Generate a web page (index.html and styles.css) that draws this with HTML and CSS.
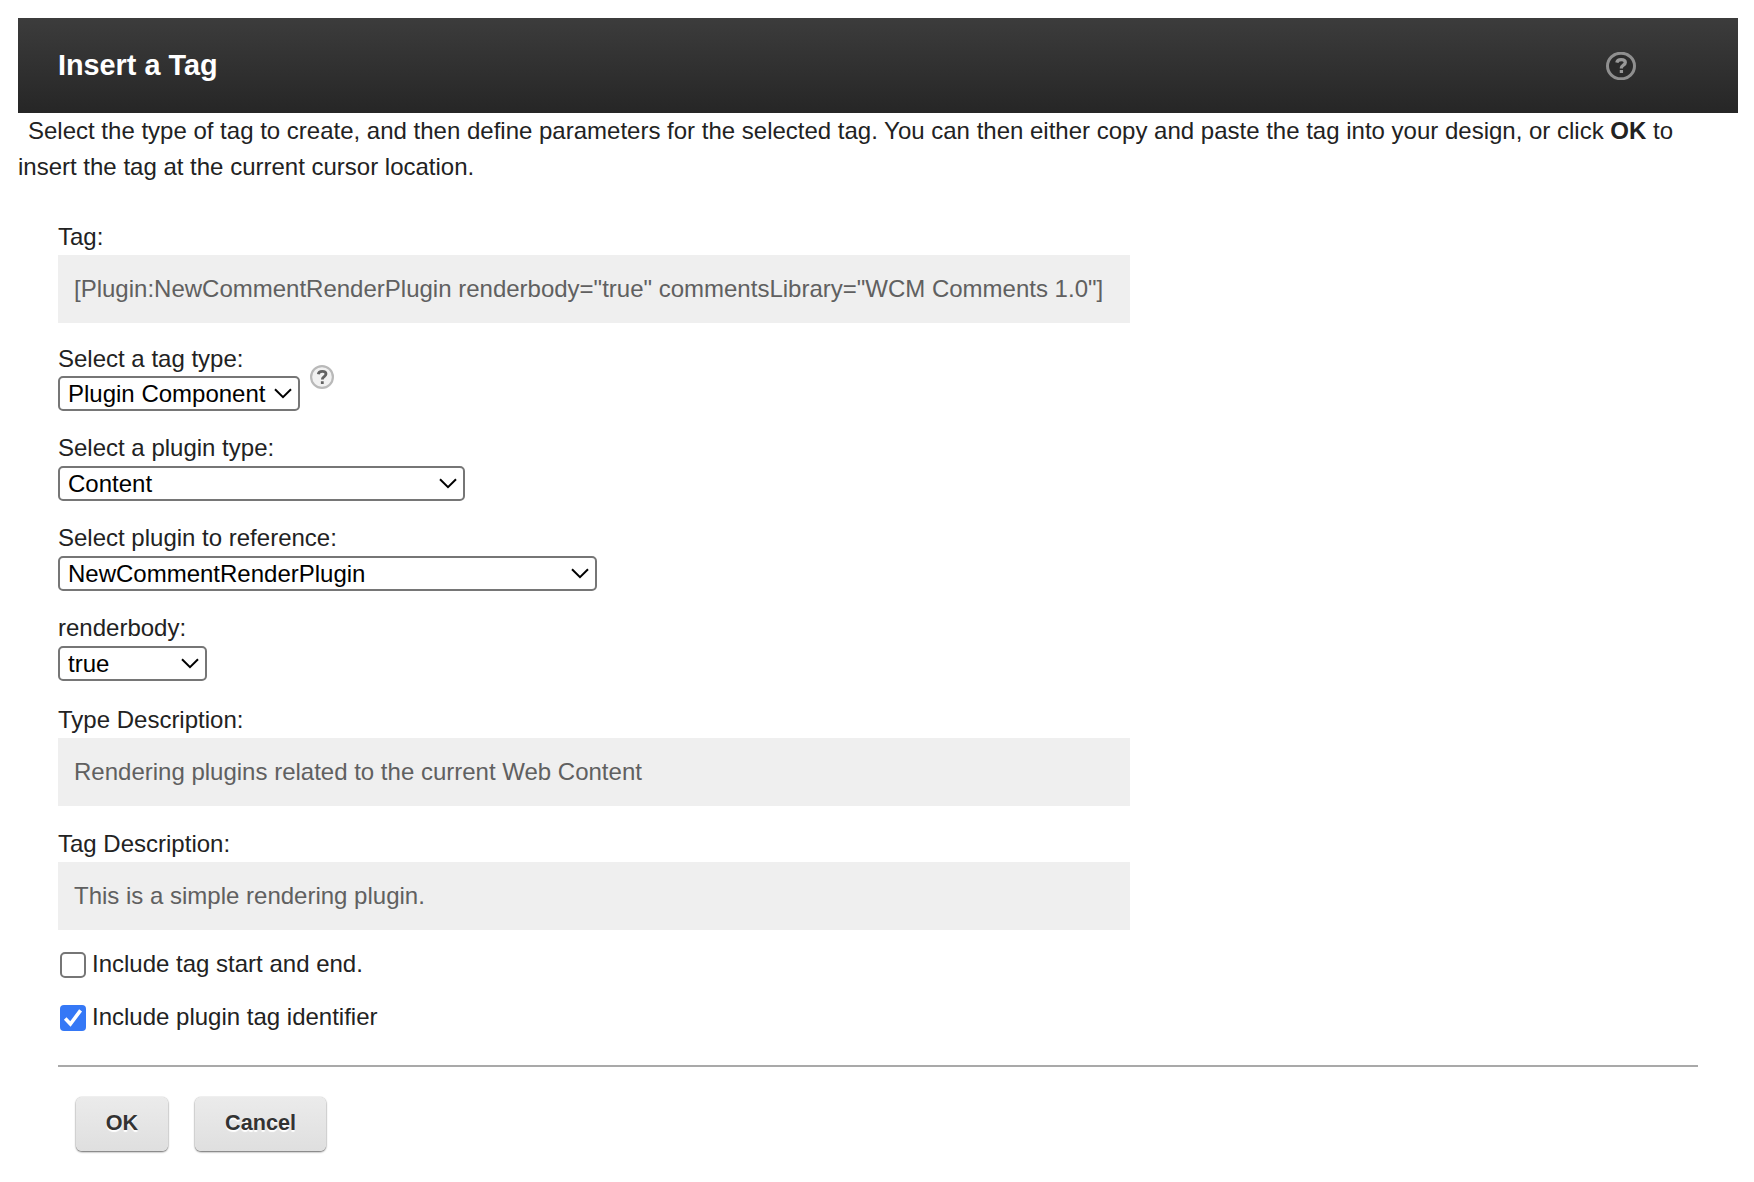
FILE: index.html
```html
<!DOCTYPE html>
<html lang="en">
<head>
<meta charset="utf-8">
<title>Insert a Tag</title>
<link rel="stylesheet" href="styles.css">
</head>
<body>
<header class="header">
  <h1 class="title">Insert a Tag</h1>
  <svg class="help-dark" width="30" height="28" viewBox="0 0 30 28"><ellipse cx="15" cy="14" rx="13.5" ry="12.8" fill="#2b2b2b" stroke="#8f8f8f" stroke-width="3"/><path d="M10.800 10.600C11.200 8.400 13 7.600 15.100 7.600c2.500 0 4.200 1.100 4.200 3 0 2.600-3.900 2.500-3.900 5.200v.7M15.400 18v3" fill="none" stroke="#999" stroke-width="3.300"/></svg>
</header>
<p class="intro">Select the type of tag to create, and then define parameters for the selected tag. You can then either copy and paste the tag into your design, or click <b>OK</b> to insert the tag at the current cursor location.</p>
<form class="form">
  <div class="field field-output">
    <label class="label">Tag:</label>
    <div class="output">[Plugin:NewCommentRenderPlugin renderbody="true" commentsLibrary="WCM Comments 1.0"]</div>
  </div>
  <div class="field with-help">
    <div>
      <label class="label" for="tag-type">Select a tag type:</label>
      <div class="select w-tag">
        <select id="tag-type"><option>Plugin Component</option></select>
        <svg class="chevron" width="18" height="11" viewBox="0 0 18 11"><path d="M1 1.200l8 8 8-8"/></svg>
      </div>
    </div>
    <svg class="help-light" width="24" height="24" viewBox="0 0 24 24"><circle cx="12" cy="12" r="10.900" fill="#f1f1f1" stroke="#b9b9b9" stroke-width="2.200"/><path d="M8.300 9.200C8.600 7 10.200 6.300 12.200 6.300c2.200 0 3.800 1 3.800 2.800 0 2.400-3.600 2.500-3.600 5v.5M12.300 16.300v2.700" fill="none" stroke="#626262" stroke-width="2.800"/></svg>
  </div>
  <div class="field">
    <label class="label" for="plugin-type">Select a plugin type:</label>
    <div class="select w-type">
      <select id="plugin-type"><option>Content</option></select>
      <svg class="chevron" width="18" height="11" viewBox="0 0 18 11"><path d="M1 1.200l8 8 8-8"/></svg>
    </div>
  </div>
  <div class="field">
    <label class="label" for="plugin-ref">Select plugin to reference:</label>
    <div class="select w-ref">
      <select id="plugin-ref"><option>NewCommentRenderPlugin</option></select>
      <svg class="chevron" width="18" height="11" viewBox="0 0 18 11"><path d="M1 1.200l8 8 8-8"/></svg>
    </div>
  </div>
  <div class="field field-last">
    <label class="label" for="renderbody">renderbody:</label>
    <div class="select w-body">
      <select id="renderbody"><option>true</option></select>
      <svg class="chevron" width="18" height="11" viewBox="0 0 18 11"><path d="M1 1.200l8 8 8-8"/></svg>
    </div>
  </div>
  <div class="field field-desc">
    <label class="label">Type Description:</label>
    <div class="output">Rendering plugins related to the current Web Content</div>
  </div>
  <div class="field field-desc">
    <label class="label">Tag Description:</label>
    <div class="output">This is a simple rendering plugin.</div>
  </div>
  <label class="check">
    <svg class="box" width="26" height="26" viewBox="0 0 26 26"><rect x="1" y="1" width="24" height="24" rx="4" fill="#fff" stroke="#767676" stroke-width="2"/></svg>
    <span>Include tag start and end.</span>
  </label>
  <label class="check">
    <svg class="box" width="26" height="26" viewBox="0 0 26 26"><rect width="26" height="26" rx="4" fill="#3578f6"/><path d="M5.200 13.600l5.200 5.400L20.600 5.400" fill="none" stroke="#fff" stroke-width="3.600"/></svg>
    <span>Include plugin tag identifier</span>
  </label>
  <div class="actions">
    <button class="btn btn-ok" type="button">OK</button>
    <button class="btn btn-cancel" type="button">Cancel</button>
  </div>
</form>
</body>
</html>
```
FILE: styles.css
```css
* { box-sizing: border-box; }
body {
  margin: 0;
  padding: 18px 16px 0 18px;
  background: #fff;
  color: #222;
  font: 24px/36px "Liberation Sans", Arial, sans-serif;
}
svg { display: block; }
.header {
  display: flex;
  align-items: center;
  justify-content: space-between;
  height: 95px;
  padding: 0 102px 0 40px;
  background: linear-gradient(#3c3c3c, #262626);
}
.title { margin: 0; padding-bottom: 2px; color: #fff; font-size: 28.8px; line-height: 36px; }
.intro { margin: 0 0 34px; text-indent: 10px; }
.form { margin: 0 40px; }
.field { margin-bottom: 19px; }
.field-output { margin-bottom: 17px; }
.field-last { margin-bottom: 21px; }
.field-desc { margin-bottom: 20px; }
.label { display: block; height: 36px; }
.with-help .label { padding-top: 1px; }
.output {
  width: 1072px;
  height: 68px;
  padding: 16px;
  background: #efefef;
  color: #606060;
}
.with-help { display: flex; gap: 10px; }
.help-light { margin-top: 25px; }
.select { display: grid; height: 35px; }
.select select {
  grid-area: 1 / 1;
  width: 100%;
  height: 35px;
  padding: 0 8px;
  appearance: none;
  border: 2px solid #767676;
  border-radius: 5px;
  background: #fff;
  color: #000;
  font: inherit;
  line-height: 31px;
}
.chevron {
  grid-area: 1 / 1;
  justify-self: end;
  align-self: center;
  margin-right: 8px;
  pointer-events: none;
  fill: none;
  stroke: #000;
  stroke-width: 2;
}
.w-tag { width: 242px; }
.w-type { width: 407px; }
.w-ref { width: 539px; }
.w-body { width: 149px; }
.check {
  display: flex;
  gap: 6px;
  height: 36px;
  margin: 0 0 17px;
  padding-left: 2px;
}
.field-desc + .check { margin-top: -4px; }
.box { margin-top: 6px; }
.actions {
  display: flex;
  gap: 27px;
  margin-top: 30px;
  padding: 30px 18px;
  border-top: 2px solid #a9a9a9;
}
.btn {
  height: 54px;
  padding: 0 0 2px;
  border: 0;
  border-radius: 6px;
  background: linear-gradient(#ebebeb, #dfdfdf);
  box-shadow: 0 1px 2px #666, 0 0 1px #aaa;
  color: #333;
  font: bold 21.6px/36px "Liberation Sans", Arial, sans-serif;
  text-shadow: 0 2px 1px #fff;
}
.btn-ok { width: 92px; }
.btn-cancel { width: 131px; }
```
